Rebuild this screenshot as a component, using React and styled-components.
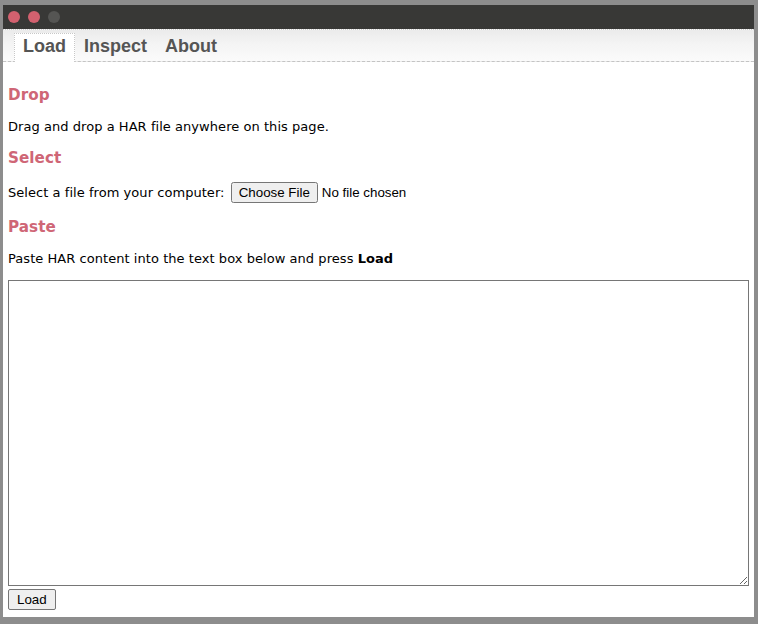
import React, { useState } from "react";
import styled, { createGlobalStyle } from "styled-components";

const GlobalStyle = createGlobalStyle`
  html, body {
    margin: 0;
    padding: 0;
    background: #8d8d8d;
  }
`;

const Frame = styled.div`
  box-sizing: border-box;
  width: 758px;
  height: 624px;
  padding: 5px 4px 0 3px;
  background: #8d8d8d;
  display: flex;
  flex-direction: column;
`;

const TitleBar = styled.div`
  height: 24px;
  flex: none;
  background: #383836;
  display: flex;
  align-items: center;
  gap: 8px;
  padding-left: 5px;
`;

const Light = styled.span`
  width: 12px;
  height: 12px;
  border-radius: 50%;
  background: ${(p) => p.$color};
`;

const Window = styled.div`
  flex: 1;
  display: flex;
  flex-direction: column;
  background: #fff;
  margin-bottom: 7px;
  overflow: hidden;
`;

const TabBar = styled.div`
  height: 31px;
  flex: none;
  display: flex;
  align-items: flex-end;
  padding-left: 11px;
  background: linear-gradient(#ebebeb, #f4f4f4 45%, #fbfbfb);
  border-top: 1px dotted #cfcfcf;
  border-bottom: 1px dashed #c4c4c4;
`;

const Tab = styled.div`
  box-sizing: border-box;
  height: 29px;
  margin-bottom: -1px;
  padding: 0 8px 3px;
  display: flex;
  align-items: center;
  font-family: "Liberation Sans", Arial, sans-serif;
  font-weight: 700;
  font-size: 18px;
  color: #555;
  cursor: pointer;
  border: 1px dotted ${(p) => (p.$active ? "#c8c8c8" : "transparent")};
  border-bottom: none;
  background: ${(p) => (p.$active ? "#fff" : "transparent")};
`;

const Content = styled.div`
  flex: 1;
  padding: 9px 5px 0 5px;
  font-family: "DejaVu Sans", Verdana, sans-serif;
  font-size: 13px;
  letter-spacing: 0.05px;
  color: #000;
`;

const Heading = styled.h3`
  margin: 15px 0;
  font-size: 15.2px;
  font-weight: 700;
  color: #cf6676;
`;

const Text = styled.p`
  margin: 13px 0;
`;

const FileInput = styled.input`
  font-family: "Liberation Sans", Arial, sans-serif;
  font-size: 13.33px;
  letter-spacing: 0;
  margin-left: 2px;
`;

const PasteBox = styled.textarea`
  display: block;
  box-sizing: border-box;
  width: 741px;
  height: 306px;
  margin: 14px 0 0;
  border: 1px solid #767676;
  resize: both;
  font-family: "Liberation Mono", monospace;
  font-size: 13px;
`;

const LoadButton = styled.button`
  display: block;
  margin-top: 3px;
  height: 21px;
  padding: 1px 8px;
  font-family: "Liberation Sans", Arial, sans-serif;
  font-size: 13.33px;
  letter-spacing: 0;
  color: #000;
  background: #efefef;
  border: 1px solid #767676;
  border-radius: 2px;
`;

const tabs = ["Load", "Inspect", "About"];

export default function App() {
  const [active, setActive] = useState("Load");
  return (
    <>
      <GlobalStyle />
      <Frame>
        <TitleBar>
          <Light $color="#d3616f" />
          <Light $color="#d3616f" />
          <Light $color="#555553" />
        </TitleBar>
        <Window>
          <TabBar>
            {tabs.map((t) => (
              <Tab key={t} $active={t === active} onClick={() => setActive(t)}>
                {t}
              </Tab>
            ))}
          </TabBar>
          <Content>
            <Heading>Drop</Heading>
            <Text>Drag and drop a HAR file anywhere on this page.</Text>
            <Heading>Select</Heading>
            <Text>
              Select a file from your computer: <FileInput type="file" />
            </Text>
            <Heading>Paste</Heading>
            <Text>
              Paste HAR content into the text box below and press <b>Load</b>
            </Text>
            <PasteBox />
            <LoadButton>Load</LoadButton>
          </Content>
        </Window>
      </Frame>
    </>
  );
}
